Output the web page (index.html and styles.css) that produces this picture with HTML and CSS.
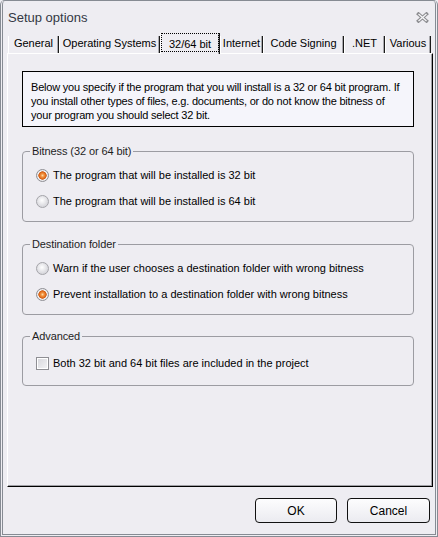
FILE: index.html
```html
<!DOCTYPE html>
<html lang="en">
<head>
    <meta charset="UTF-8">
    <title>Setup options</title>
    <link rel="stylesheet" href="styles.css">
</head>
<body>
    <div class="window">
        <div class="titlebar">
            <span class="title">Setup options</span>
            <svg class="close" width="13" height="11" viewBox="0 0 13 11">
                <path d="M2.5 2 L10.5 9 M10.5 2 L2.5 9" stroke="#8c8c90" stroke-width="3.4" stroke-linecap="square"/>
                <path d="M2.5 2 L10.5 9 M10.5 2 L2.5 9" stroke="#f6f6f8" stroke-width="1.3"/>
            </svg>
        </div>

        <div class="tabs">
            <div class="tab w1">General</div>
            <div class="tab w2">Operating Systems</div>
            <div class="tab w3 active"><span>32/64 bit</span></div>
            <div class="tab w4">Internet</div>
            <div class="tab w5">Code Signing</div>
            <div class="tab w6">.NET</div>
            <div class="tab w7">Various</div>
        </div>

        <div class="panel">
            <div class="info">
                Below you specify if the program that you will install is a 32 or 64 bit program. If<br>
                you install other types of files, e.g. documents, or do not know the bitness of<br>
                your program you should select 32 bit.
            </div>

            <fieldset class="group first">
                <legend>Bitness (32 or 64 bit)</legend>
                <div class="opt"><span class="radio on"></span>The program that will be installed is 32 bit</div>
                <div class="opt"><span class="radio"></span>The program that will be installed is 64 bit</div>
            </fieldset>

            <fieldset class="group">
                <legend>Destination folder</legend>
                <div class="opt"><span class="radio"></span>Warn if the user chooses a destination folder with wrong bitness</div>
                <div class="opt"><span class="radio on"></span>Prevent installation to a destination folder with wrong bitness</div>
            </fieldset>

            <fieldset class="group last">
                <legend>Advanced</legend>
                <div class="opt"><span class="check"></span>Both 32 bit and 64 bit files are included in the project</div>
            </fieldset>
        </div>

        <div class="buttons">
            <button class="btn ok">OK</button>
            <button class="btn cancel">Cancel</button>
        </div>
    </div>
</body>
</html>
```

FILE: styles.css
```css
* {
    box-sizing: border-box;
}
body {
    margin: 0;
    background-color: #eeedf2;
    font-family: "Liberation Sans", Arial, sans-serif;
    color: #000;
}
.window {
    width: 438px;
    height: 537px;
    border: 3px double #868b93;
    border-top: 1px solid #868b93;
    border-radius: 5px 5px 0 0;
    background-color: #eeedf2;
}
.titlebar {
    height: 32px;
    display: flex;
    align-items: center;
    justify-content: space-between;
    padding: 0 6px 0 5px;
}
.title {
    font-size: 13px;
    color: #333844;
}

/* tab strip */
.tabs {
    display: flex;
    align-items: flex-end;
    height: 20px;
    padding-left: 5px;
    position: relative;
    z-index: 1;
}
.tab {
    height: 17px;
    font-size: 11px;
    line-height: 15px;
    text-align: center;
    white-space: nowrap;
    border-left: 1px solid #fff;
    border-right: 1px solid #1a1a1a;
    box-shadow: inset -1px 0 #a9a9ae;
}
.tab.active {
    height: 21px;
    margin-bottom: -1px;
    background-color: #eeedf2;
}
.tab.active span {
    display: block;
    height: 19px;
    border: 1px dotted #000;
    padding-top: 3px;
    line-height: 14px;
}
.w1 { width: 51px; }
.w2 { width: 101px; }
.w3 { width: 60px; }
.w4 { width: 43px; }
.w5 { width: 81px; }
.w6 { width: 41px; }
.w7 { width: 46px; }

/* tab page */
.panel {
    width: 426px;
    height: 434px;
    margin-left: 4px;
    border: 1px solid;
    border-color: #fff #000 #000 #fff;
    box-shadow: inset -1px -1px #a0a0a5;
    padding: 17px 0 0 14px;
}
.info {
    width: 392px;
    height: 56px;
    border: 1px solid #000;
    background-color: #f5f5fb;
    padding: 8px 8px 0;
    font-size: 11px;
    line-height: 14px;
    letter-spacing: -0.2px;
}
.group {
    width: 392px;
    min-width: 0;
    margin: 15px 0 0;
    padding: 4px 0 7px;
    border: 1px solid #9c9ca2;
    border-radius: 4px;
}
.group.first {
    margin-top: 17px;
}
.group.last {
    margin-top: 14px;
    padding: 7px 0 9px;
}
.group legend {
    margin-left: 7px;
    padding: 0 2px;
    font-size: 11px;
    line-height: 14px;
    color: #1e1e1e;
    letter-spacing: -0.1px;
}
.opt {
    display: flex;
    align-items: center;
    gap: 4px;
    height: 26px;
    padding-left: 13px;
    font-size: 11px;
    white-space: nowrap;
}
.radio {
    width: 13px;
    height: 13px;
    border-radius: 50%;
    border: 1px solid #a4a4a9;
    background: radial-gradient(circle at 45% 40%, #ffffff 0, #f2f2f4 2px, #d9d9de 6px);
}
.radio.on {
    border-color: #8f8f94;
    background: radial-gradient(circle, #fcd9a8 0, #f39440 1.6px, #dc6618 3.4px, #c85a14 3.9px, #f5f5f7 4.4px, #dedee2 6px);
}
.check {
    width: 13px;
    height: 13px;
    border: 1px solid #8e8e93;
    box-shadow: inset 1px 1px #fff, inset -1px -1px #fff;
    background: linear-gradient(135deg, #d6d6db, #f4f4f6);
}

/* dialog buttons */
.buttons {
    display: flex;
    justify-content: flex-end;
    gap: 10px;
    margin-top: 11px;
    padding-right: 5px;
}
.btn {
    width: 83px;
    height: 25px;
    border: 1px solid #111;
    border-radius: 4px;
    background: linear-gradient(#fdfdfe, #ebebf0);
    font-family: "Liberation Sans", Arial, sans-serif;
    font-size: 12px;
    color: #000;
    padding: 0;
}
.btn.ok {
    width: 82px;
}
```
